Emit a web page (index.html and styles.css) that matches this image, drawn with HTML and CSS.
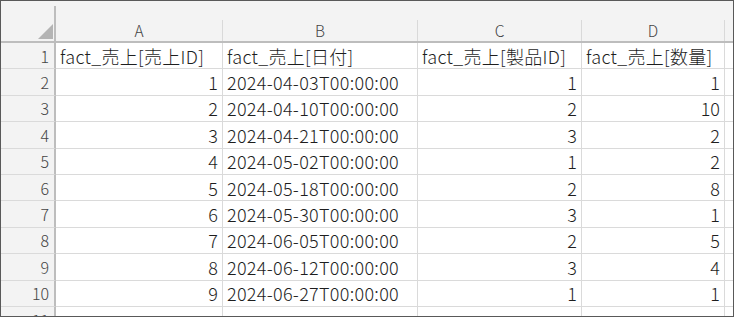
FILE: index.html
```html
<!DOCTYPE html>
<html lang="ja">
<head>
<meta charset="utf-8">
<link rel="stylesheet" href="styles.css">
</head>
<body>
<div class="frame">
  <div class="sheet">
    <div class="corner"><div class="corner-in"><span class="tri"></span></div></div>
    <div class="colh"><div class="colh-in">A</div></div>
    <div class="colh"><div class="colh-in">B</div></div>
    <div class="colh"><div class="colh-in">C</div></div>
    <div class="colh"><div class="colh-in">D</div></div>
    <div class="colh"><div class="colh-in"></div></div>

    <div class="rowh">1</div>
    <div class="c">fact_売上[売上ID]</div>
    <div class="c">fact_売上[日付]</div>
    <div class="c">fact_売上[製品ID]</div>
    <div class="c">fact_売上[数量]</div>
    <div class="c"></div>

    <div class="rowh">2</div>
    <div class="c n">1</div>
    <div class="c">2024-04-03T00:00:00</div>
    <div class="c n">1</div>
    <div class="c n">1</div>
    <div class="c"></div>

    <div class="rowh">3</div>
    <div class="c n">2</div>
    <div class="c">2024-04-10T00:00:00</div>
    <div class="c n">2</div>
    <div class="c n">10</div>
    <div class="c"></div>

    <div class="rowh">4</div>
    <div class="c n">3</div>
    <div class="c">2024-04-21T00:00:00</div>
    <div class="c n">3</div>
    <div class="c n">2</div>
    <div class="c"></div>

    <div class="rowh">5</div>
    <div class="c n">4</div>
    <div class="c">2024-05-02T00:00:00</div>
    <div class="c n">1</div>
    <div class="c n">2</div>
    <div class="c"></div>

    <div class="rowh">6</div>
    <div class="c n">5</div>
    <div class="c">2024-05-18T00:00:00</div>
    <div class="c n">2</div>
    <div class="c n">8</div>
    <div class="c"></div>

    <div class="rowh">7</div>
    <div class="c n">6</div>
    <div class="c">2024-05-30T00:00:00</div>
    <div class="c n">3</div>
    <div class="c n">1</div>
    <div class="c"></div>

    <div class="rowh">8</div>
    <div class="c n">7</div>
    <div class="c">2024-06-05T00:00:00</div>
    <div class="c n">2</div>
    <div class="c n">5</div>
    <div class="c"></div>

    <div class="rowh">9</div>
    <div class="c n">8</div>
    <div class="c">2024-06-12T00:00:00</div>
    <div class="c n">3</div>
    <div class="c n">4</div>
    <div class="c"></div>

    <div class="rowh">10</div>
    <div class="c n">9</div>
    <div class="c">2024-06-27T00:00:00</div>
    <div class="c n">1</div>
    <div class="c n">1</div>
    <div class="c"></div>

    <div class="rowh">11</div>
    <div class="c"></div>
    <div class="c"></div>
    <div class="c"></div>
    <div class="c"></div>
    <div class="c"></div>
  </div>
</div>
</body>
</html>
```
FILE: styles.css
```css
html, body {
  margin: 0;
  padding: 0;
  background: #ffffff;
}

.frame {
  box-sizing: border-box;
  width: 734px;
  height: 317px;
  border: 1px solid #595959;
  overflow: hidden;
  background: #ffffff;
}

.sheet {
  display: grid;
  grid-template-columns: 55px 167px 195px 164px 143px 40px;
  grid-template-rows: 42px repeat(11, 26.4px);
}

.corner {
  box-sizing: border-box;
  background: #f3f3f3;
  padding-top: 5px;
  display: flex;
  flex-direction: column;
}

.corner-in {
  flex: 1;
  border-right: 2px solid #bdbdbd;
  border-bottom: 2px solid #bdbdbd;
  display: flex;
  justify-content: flex-end;
  align-items: flex-end;
  padding: 0 1px 2px 0;
}

.tri {
  width: 0;
  height: 0;
  border-left: 15px solid transparent;
  border-bottom: 15px solid #b4b4b4;
}

.colh {
  box-sizing: border-box;
  background: #f3f3f3;
  padding-top: 19px;
  border-bottom: 2px solid #bdbdbd;
  display: flex;
  flex-direction: column;
}

.colh-in {
  flex: 1;
  border-right: 1px solid #d9d9d9;
  display: flex;
  align-items: center;
  justify-content: center;
  font-family: "Noto Sans CJK JP", "Noto Sans", sans-serif;
  font-size: 15.5px;
  font-weight: 300;
  line-height: 1;
  color: #444444;
  padding-top: 1px;
}

.rowh {
  box-sizing: border-box;
  background: #f3f3f3;
  border-right: 2px solid #bdbdbd;
  border-bottom: 1px solid #dadada;
  display: flex;
  align-items: center;
  justify-content: flex-end;
  padding-right: 5px;
  font-family: "Noto Sans CJK JP", "Noto Sans", sans-serif;
  font-size: 16px;
  font-weight: 300;
  line-height: 1;
  color: #444444;
}

.c {
  box-sizing: border-box;
  border-right: 1px solid #dadada;
  border-bottom: 1px solid #dadada;
  display: flex;
  align-items: center;
  padding: 0 4px;
  font-family: "Noto Sans CJK JP", "Noto Sans", sans-serif;
  font-size: 18px;
  font-weight: 300;
  letter-spacing: 0.3px;
  line-height: 1;
  color: #1e1e1e;
  white-space: nowrap;
  overflow: hidden;
}

.n {
  justify-content: flex-end;
  padding-right: 4px;
  letter-spacing: 0;
}
```
